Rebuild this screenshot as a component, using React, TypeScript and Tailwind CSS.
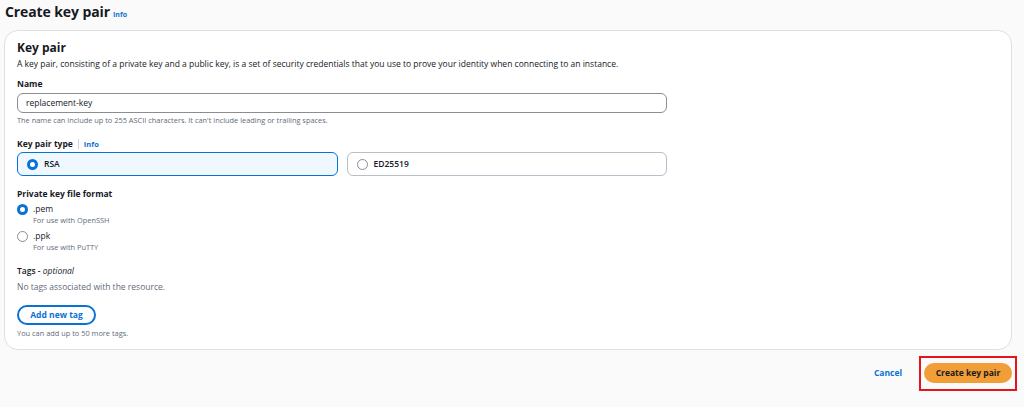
import React from "react"

const font = { fontFamily: '"Open Sans", "Noto Sans", sans-serif' }

function Radio({ checked }: { checked: boolean }) {
    return checked ? (
        <span className="block w-[11px] h-[11px] rounded-full border-[3.5px] border-[#0972d3] bg-white shrink-0" />
    ) : (
        <span className="block w-[11px] h-[11px] rounded-full border border-[#8c8c94] bg-white shrink-0" />
    )
}

export default function App() {
    return (
        <div className="w-[1024px] h-[407px] bg-[#fafafa] text-[#16191f] overflow-hidden" style={font}>
            <div className="flex items-baseline gap-[3px] pl-[5px] pt-[3px] h-[30px]">
                <h1 className="text-[14px] font-bold leading-[18px] tracking-[-0.1px]">Create key pair</h1>
                <span className="text-[7px] font-bold text-[#0972d3]">Info</span>
            </div>

            <div className="ml-[4px] w-[1008px] h-[320px] bg-white border border-[#e0e0e3] rounded-[14px] px-[12px] pt-[9px]">
                <h2 className="text-[12px] font-bold leading-[16px]">Key pair</h2>
                <p className="text-[8.5px] leading-[12px] mt-[2px]">
                    A key pair, consisting of a private key and a public key, is a set of security credentials that you use to prove your identity when connecting to an instance.
                </p>

                <div className="mt-[8px] text-[8.5px] font-bold leading-[12px]">Name</div>
                <div className="mt-[3px] w-[650px] h-[20px] border border-[#8c8c94] rounded-[6px] flex items-center px-[8px] text-[8.5px]">
                    replacement-key
                </div>
                <p className="mt-[2px] text-[7.4px] leading-[10px] text-[#5f6b7a]">
                    The name can include up to 255 ASCII characters. It can't include leading or trailing spaces.
                </p>

                <div className="mt-[13px] flex items-center text-[8.5px] leading-[12px]">
                    <span className="font-bold">Key pair type</span>
                    <span className="mx-[5px] h-[10px] w-px bg-[#d1d5db]" />
                    <span className="font-bold text-[7.5px] text-[#0972d3]">Info</span>
                </div>
                <div className="mt-[2px] flex gap-[9px] w-[650px]">
                    <div className="flex-1 h-[24px] rounded-[6px] border border-[#0972d3] bg-[#f0f8ff] flex items-center gap-[6px] px-[9px] text-[8.5px] font-semibold">
                        <Radio checked />
                        RSA
                    </div>
                    <div className="flex-1 h-[24px] rounded-[6px] border border-[#b6bec9] bg-white flex items-center gap-[6px] px-[9px] text-[8.5px] font-semibold">
                        <Radio checked={false} />
                        ED25519
                    </div>
                </div>

                <div className="mt-[12px] text-[8.5px] font-bold leading-[12px]">Private key file format</div>
                <div className="mt-[3px] flex gap-[5px] leading-none">
                    <div className="pt-[1px]"><Radio checked /></div>
                    <div>
                        <div className="text-[8.5px] leading-[12px]">.pem</div>
                        <div className="text-[7.4px] leading-[10px] text-[#5f6b7a]">For use with OpenSSH</div>
                    </div>
                </div>
                <div className="mt-[5px] flex gap-[5px] leading-none">
                    <div className="pt-[1px]"><Radio checked={false} /></div>
                    <div>
                        <div className="text-[8.5px] leading-[12px]">.ppk</div>
                        <div className="text-[7.4px] leading-[10px] text-[#5f6b7a]">For use with PuTTY</div>
                    </div>
                </div>

                <div className="mt-[13px] text-[8.5px] leading-[12px]">
                    <span className="font-semibold">Tags - </span>
                    <i>optional</i>
                </div>
                <p className="mt-[4px] text-[8.5px] leading-[12px] text-[#5f6b7a]">No tags associated with the resource.</p>

                <button className="mt-[12px] h-[20px] w-[79px] rounded-full border-2 border-[#0972d3] text-[#0972d3] text-[8.5px] font-bold block">
                    Add new tag
                </button>
                <p className="mt-[3px] text-[7.4px] leading-[10px] text-[#5f6b7a]">You can add up to 50 more tags.</p>
            </div>

            <div className="flex justify-end items-center w-[1012px] mt-[6px] gap-[17px]">
                <button className="text-[8.5px] font-bold text-[#0972d3]">Cancel</button>
                <div className="border-2 border-[#e3141c] px-[3px] pt-[5px] pb-[6px] -mr-[5px]">
                    <button className="h-[20px] w-[88px] rounded-full bg-[#f19e36] text-[8.5px] font-bold text-[#16191f] block">
                        Create key pair
                    </button>
                </div>
            </div>
        </div>
    )
}
